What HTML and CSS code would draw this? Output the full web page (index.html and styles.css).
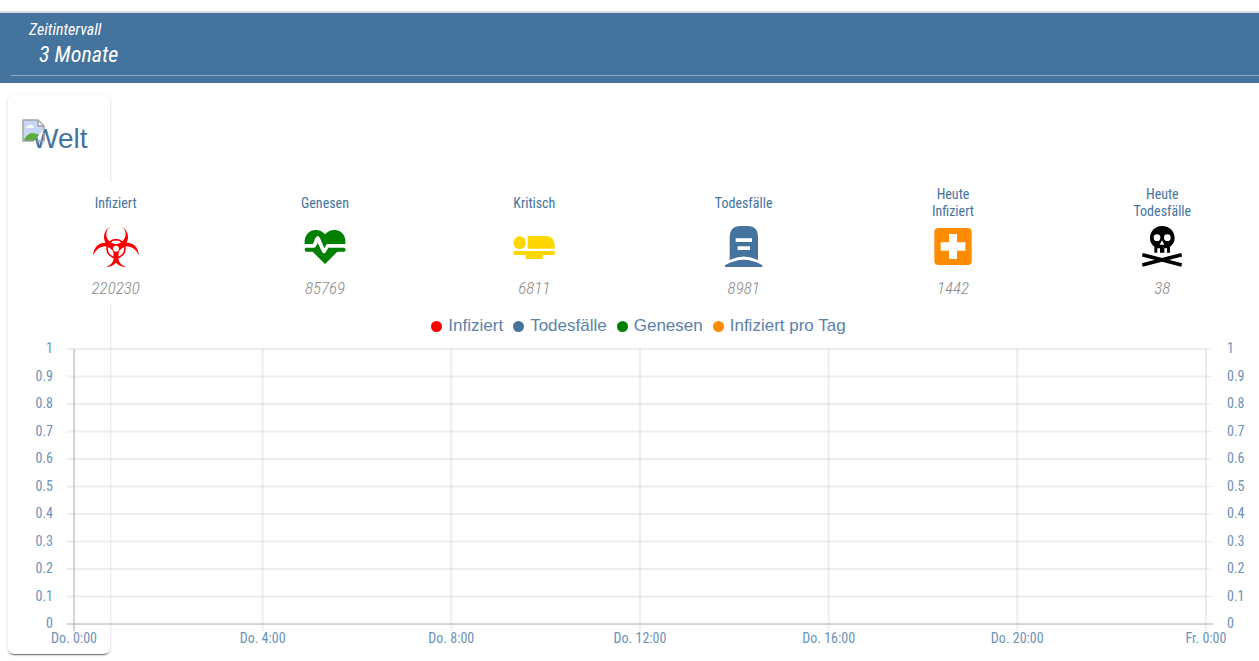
FILE: index.html
```
<!DOCTYPE html>
<html lang="de">
<head>
<meta charset="utf-8">
<meta name="viewport" content="width=device-width, initial-scale=1">
<title>Welt</title>
<link rel="stylesheet" href="styles.css">
</head>
<body>
<header class="toolbar">
  <div class="field">
    <label class="field-label" for="interval">Zeitintervall</label>
    <select class="field-select" id="interval">
      <option>3 Monate</option>
    </select>
  </div>
</header>
<main class="panel">
  <h1 class="title">
    <svg class="flag" viewBox="0 0 23 23" aria-hidden="true">
      <path d="M1 1h15l6 6v3L12 22H1z" fill="#c5d7f5"/>
      <path d="M4 9a2 2 0 0 1 2-2 3 3 0 0 1 5 0 2 2 0 0 1 1 2z" fill="#fff"/>
      <path d="M2 21c2-4 5-7 8-7 3 0 5 1 7 2L12 22H2z" fill="#5aac3b"/>
      <path d="M16 1v6h6z" fill="#fff"/>
      <path d="M22 11V7L16 1H1v21h11M16 1v6h6M22 14v8h-7" fill="none" stroke="#a3a3a3" stroke-width="1.400"/>
    </svg>
    <span class="title-text">Welt</span>
  </h1>
  <section class="stats">
    <div class="stat">
      <h2 class="stat-name">Infiziert</h2>
      <svg class="icon infected" viewBox="69 138 138 126" aria-hidden="true">
        <g fill="currentColor">
          <path d="M120 140A36 36 0 1 0 156 140A29 29 0 1 1 120 140"/>
          <path d="M69 226C72 198 88 187 108 188Q132 190 145 212V236Q138 258 106 262Q130 252 131 236V220Q125 202 104 199Q82 200 69 226Z"/>
          <path d="M207 226C204 198 188 187 168 188Q144 190 131 212V236Q138 258 170 262Q146 252 145 236V220Q151 202 172 199Q194 200 207 226Z"/>
        </g>
        <circle cx="138" cy="206" r="27" fill="none" stroke="currentColor" stroke-width="5"/>
        <circle cx="138" cy="206" r="9" fill="#fff"/>
      </svg>
      <span class="stat-value">220230</span>
    </div>
    <div class="stat">
      <h2 class="stat-name">Genesen</h2>
      <svg class="icon healed" viewBox="696 138 138 126" aria-hidden="true">
        <path d="M704 192C702 168 716 150 737 150Q754 150 765 163Q777 150 793 150C815 150 829 168 826 192H774Q769 192 768 196L763 205 750 174Q743 162 736 174L729 192Z" fill="currentColor"/>
        <path d="M708 203H732Q737 203 738 199L743 188 756 215Q763 226 769 214L775 203H822Q827 204 827 209T822 215H802L765 252 728 215H708Q704 214 704 209T708 203Z" fill="currentColor"/>
      </svg>
      <span class="stat-value">85769</span>
    </div>
    <div class="stat">
      <h2 class="stat-name">Kritisch</h2>
      <svg class="icon critical" viewBox="64 138 138 126" aria-hidden="true">
        <circle cx="90" cy="188" r="19" fill="currentColor"/>
        <path d="M114 168H170Q195 171 195 196V206H114ZM72 213H195V225H159V237H108V225H72Z" fill="currentColor"/>
      </svg>
      <span class="stat-value">6811</span>
    </div>
    <div class="stat">
      <h2 class="stat-name">Todesfälle</h2>
      <svg class="icon deaths" viewBox="693 138 138 126" aria-hidden="true">
        <path d="M719 240V170Q720 138 750 138H774Q804 138 804 170V240Q762 219 719 240ZM705 261V256Q762 223 817 256V261Z" fill="currentColor"/>
        <path d="M737 175H786V186H737ZM743 199H780V210H743Z" fill="#fff"/>
      </svg>
      <span class="stat-value">8981</span>
    </div>
    <div class="stat">
      <h2 class="stat-name">Heute<br>Infiziert</h2>
      <svg class="icon today" viewBox="60 138 138 126" aria-hidden="true">
        <rect x="73" y="144" width="112" height="111" rx="12" fill="currentColor"/>
        <path d="M117 162H141V187H166V212H141V237H117V212H92V187H117Z" fill="#fff"/>
      </svg>
      <span class="stat-value">1442</span>
    </div>
    <div class="stat">
      <h2 class="stat-name">Heute<br>Todesfälle</h2>
      <svg class="icon skull" viewBox="688 138 138 126" aria-hidden="true">
        <path d="M757 138C781 138 795 155 795 174Q795 190 781 200V218H772V205H764V218H751V205H743V218H734V200Q721 190 721 174C721 155 735 138 757 138Z" fill="currentColor"/>
        <circle cx="742" cy="173" r="10" fill="#fff"/>
        <circle cx="773" cy="173" r="10" fill="#fff"/>
        <path d="M757 181 764 194H750Z" fill="#fff"/>
        <path d="M698 224 816 255M816 224 698 255" stroke="currentColor" stroke-width="11"/>
      </svg>
      <span class="stat-value">38</span>
    </div>
  </section>
  <ul class="legend">
    <li class="legend-item infected">Infiziert</li>
    <li class="legend-item deaths">Todesfälle</li>
    <li class="legend-item healed">Genesen</li>
    <li class="legend-item today">Infiziert pro Tag</li>
  </ul>
  <section class="chart">
    <ol class="y-axis y-left">
      <li>1</li><li>0.9</li><li>0.8</li><li>0.7</li><li>0.6</li><li>0.5</li><li>0.4</li><li>0.3</li><li>0.2</li><li>0.1</li><li>0</li>
    </ol>
    <svg class="plot" aria-hidden="true">
      <g class="grid-lines">
        <line x1="16.667%" x2="16.667%" y2="282"/><line x1="33.333%" x2="33.333%" y2="282"/><line x1="50%" x2="50%" y2="282"/><line x1="66.667%" x2="66.667%" y2="282"/><line x1="83.333%" x2="83.333%" y2="282"/><line x1="100%" x2="100%" y2="282"/>
        <line x1="-7" x2="100%" y1="0%" y2="0%"/><line x1="-7" x2="100%" y1="10%" y2="10%"/><line x1="-7" x2="100%" y1="20%" y2="20%"/><line x1="-7" x2="100%" y1="30%" y2="30%"/><line x1="-7" x2="100%" y1="40%" y2="40%"/><line x1="-7" x2="100%" y1="50%" y2="50%"/><line x1="-7" x2="100%" y1="60%" y2="60%"/><line x1="-7" x2="100%" y1="70%" y2="70%"/><line x1="-7" x2="100%" y1="80%" y2="80%"/><line x1="-7" x2="100%" y1="90%" y2="90%"/>
      </g>
      <g class="axis-lines">
        <line x1="0" x2="0" y2="282"/>
        <line x1="-7" x2="100%" y1="100%" y2="100%"/>
      </g>
      <svg class="ticks" x="100%">
        <path class="tick" d="M0 0h7M0 27.500h7M0 55h7M0 82.500h7M0 110h7M0 137.500h7M0 165h7M0 192.500h7M0 220h7M0 247.500h7"/>
        <path class="base-tick" d="M0 275h7"/>
      </svg>
    </svg>
    <ol class="y-axis">
      <li>1</li><li>0.9</li><li>0.8</li><li>0.7</li><li>0.6</li><li>0.5</li><li>0.4</li><li>0.3</li><li>0.2</li><li>0.1</li><li>0</li>
    </ol>
    <ol class="x-axis">
      <li>Do. 0:00</li><li>Do. 4:00</li><li>Do. 8:00</li><li>Do. 12:00</li><li>Do. 16:00</li><li>Do. 20:00</li><li>Fr. 0:00</li>
    </ol>
  </section>
</main>
</body>
</html>
```
FILE: styles.css
```
* {
  box-sizing: border-box;
}

body {
  min-height: 100vh;
  margin: 0;
  padding-top: 11px;
  overflow: hidden;
  background: #fff;
  color: #44739e;
  font-family: "Roboto Condensed", Roboto, sans-serif;
}

ol,
ul {
  margin: 0;
  padding: 0;
  list-style: none;
}

.toolbar {
  height: 72px;
  padding-left: 11px;
  border-top: 2px solid #dadce0;
  background: #44739e;
  color: #fff;
}

.field {
  display: flex;
  flex-direction: column;
  align-items: flex-start;
  height: 63px;
  padding: 7px 0 0 18px;
  border-bottom: 1px solid #8fa7bd;
}

.field-label {
  font-size: 16px;
  font-style: italic;
  line-height: 20px;
}

.field-select {
  height: 30px;
  margin-left: 10px;
  padding: 0;
  border: 0;
  appearance: none;
  background: transparent;
  color: inherit;
  font: italic 22px/30px "Roboto Condensed", Roboto, sans-serif;
}

.panel {
  position: relative;
  margin-top: 11px;
  padding-bottom: 7px;
}

.panel::before {
  content: "";
  position: absolute;
  z-index: -1;
  inset: 0 auto 0 8px;
  width: 102px;
  border-radius: 6px;
  box-shadow: 0 2px 1px -1px rgba(0, 0, 0, 0.5), 0 1px 3px rgba(0, 0, 0, 0.2);
  background: #fff;
}

.title {
  position: relative;
  height: 88px;
  margin: 0;
  padding: 29px 0 0 32px;
  font: 28px/32px "Liberation Sans", Arial, sans-serif;
}

.flag {
  position: absolute;
  top: 25px;
  left: 22px;
  width: 23px;
  height: 23px;
}

.stats {
  display: grid;
  grid-template-columns: repeat(6, 1fr);
  margin: 0 -8px 0 11px;
  background: #fff;
}

.stat {
  display: flex;
  flex-direction: column;
  align-items: center;
  height: 121px;
  padding-top: 4px;
}

.stat-name {
  display: flex;
  align-items: center;
  height: 34px;
  margin: 0 0 6px;
  font-size: 14px;
  font-weight: 400;
  line-height: 17px;
  text-align: center;
}

.icon {
  width: 46px;
  height: 42px;
}

.stat-value {
  margin-top: 10px;
  color: #8a8a8a;
  font-size: 17px;
  font-style: italic;
  font-weight: 300;
  line-height: 20px;
}

.infected { color: #f00; }
.healed { color: #008000; }
.critical { color: #ffd700; }
.deaths { color: #44739e; }
.today { color: #ff8c00; }
.skull { color: #000; }

.legend {
  display: flex;
  justify-content: center;
  gap: 10px;
  padding: 13px 0 0 18px;
  font: 17px/20px "Liberation Sans", Arial, sans-serif;
}

.legend-item {
  display: flex;
  align-items: center;
  gap: 6px;
  -webkit-text-fill-color: #5b82a8;
}

.legend-item::before {
  content: "";
  width: 11px;
  height: 11px;
  border-radius: 50%;
  background: currentColor;
}

.chart {
  display: grid;
  grid-template-columns: 53px 1fr 32px;
  column-gap: 21px;
  padding-top: 3px;
  color: #6c92b8;
  font-size: 14px;
  line-height: 18px;
}

.y-axis {
  display: flex;
  flex-direction: column;
  justify-content: space-between;
  height: 293px;
}

.y-left {
  text-align: right;
}

.plot {
  width: 100%;
  height: 275px;
  margin-top: 10px;
  overflow: visible;
}

.ticks {
  overflow: visible;
}

.grid-lines,
.tick {
  stroke: rgba(0, 0, 0, 0.07);
}

.grid-lines {
  stroke-width: 2;
}

.axis-lines,
.base-tick {
  stroke: #aaa;
}

.x-axis {
  display: flex;
  grid-column: 2;
  justify-content: space-between;
  margin-top: -3px;
}

.x-axis li {
  display: flex;
  justify-content: center;
  width: 0;
  white-space: nowrap;
}
```
